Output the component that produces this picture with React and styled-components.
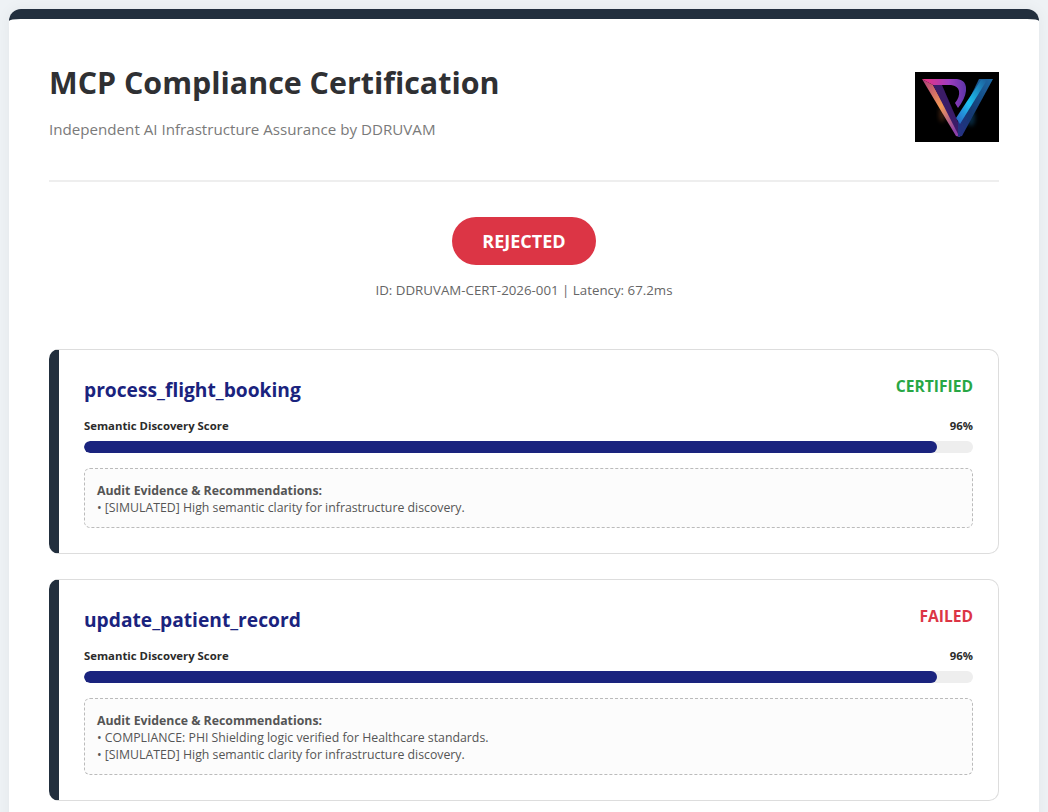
import React from 'react';
import styled, { createGlobalStyle } from 'styled-components';

const GlobalStyle = createGlobalStyle`
  html, body {
    margin: 0;
    padding: 0;
    background: #eef2f5;
    font-family: "Open Sans", "Noto Sans", "Liberation Sans", sans-serif;
  }
`;

const Page = styled.div`
  padding: 9px 9px 20px;
`;

const Sheet = styled.div`
  background: #fff;
  border-top: 10px solid #222f3e;
  border-radius: 12px;
  padding: 30px 40px 40px;
  box-shadow: 0 0 15px rgba(0, 0, 0, 0.05);
`;

const Header = styled.header`
  display: flex;
  justify-content: space-between;
  align-items: flex-start;
  height: 131px;
  border-bottom: 2px solid #eee;
  box-sizing: content-box;
`;

const Title = styled.h1`
  margin: 10px 0 0;
  font-size: 30.4px;
  line-height: 48px;
  font-weight: 700;
  color: #2f3033;
`;

const Subtitle = styled.p`
  margin: 11px 0 0;
  font-size: 15.15px;
  line-height: 22px;
  color: #7a7a7a;
`;

const LogoBox = styled.div`
  width: 84px;
  height: 70px;
  margin-top: 23px;
  background: #000;
`;

const Verdict = styled.section`
  display: flex;
  flex-direction: column;
  align-items: center;
  padding-top: 35px;
  margin-bottom: 50px;
`;

const Badge = styled.div`
  width: 144px;
  height: 48px;
  border-radius: 24px;
  background: #dc3545;
  color: #fff;
  font-size: 18px;
  font-weight: 700;
  line-height: 48px;
  text-align: center;
`;

const Meta = styled.div`
  margin-top: 16px;
  font-size: 13.3px;
  line-height: 18px;
  color: #666;
`;

const Card = styled.article`
  border: 1px solid #ddd;
  border-left: 10px solid #222f3e;
  border-radius: 10px;
  padding: 24px 25px 25px;
  margin-bottom: 25px;
`;

const CardTop = styled.div`
  display: flex;
  justify-content: space-between;
  align-items: flex-start;
  height: 43px;
`;

const ToolName = styled.h3`
  margin: 0;
  font-size: 19.2px;
  line-height: 32px;
  font-weight: 700;
  color: #1a237e;
`;

const Status = styled.span`
  font-size: 15.6px;
  line-height: 25px;
  font-weight: 700;
  color: ${(p) => p.color};
`;

const ScoreRow = styled.div`
  display: flex;
  justify-content: space-between;
  font-size: 11.35px;
  line-height: 18px;
  font-weight: 700;
  color: #2b2b2b;
`;

const Track = styled.div`
  height: 12px;
  margin-top: 6px;
  border-radius: 6px;
  background: #eee;
  overflow: hidden;
`;

const Fill = styled.div`
  height: 100%;
  border-radius: 6px;
  background: #1a237e;
`;

const Evidence = styled.div`
  margin-top: 15px;
  padding: 13px 12px 11px;
  border: 1px dashed #bbb;
  border-radius: 6px;
  background: #fcfcfc;
  font-size: 12.3px;
  line-height: 17px;
  color: #555;
`;

const EvidenceHead = styled.div`
  font-weight: 700;
`;

function Logo() {
  return (
    <LogoBox>
      <svg width="84" height="70" viewBox="0 0 84 70">
        <defs>
          <linearGradient id="leftArm" x1="0" y1="0" x2="0.7" y2="1">
            <stop offset="0" stopColor="#a83a7c" />
            <stop offset="0.55" stopColor="#f39a55" />
            <stop offset="1" stopColor="#8d3fa8" />
          </linearGradient>
          <linearGradient id="topBar" x1="0" y1="0" x2="1" y2="0">
            <stop offset="0" stopColor="#f0327c" />
            <stop offset="0.6" stopColor="#a03cc0" />
            <stop offset="1" stopColor="#5c35a8" />
          </linearGradient>
          <linearGradient id="outerArm" x1="1" y1="0" x2="0" y2="1">
            <stop offset="0" stopColor="#1f6aa6" />
            <stop offset="0.6" stopColor="#123a72" />
            <stop offset="1" stopColor="#2a2f86" />
          </linearGradient>
          <linearGradient id="innerArm" x1="1" y1="0" x2="0" y2="1">
            <stop offset="0" stopColor="#1a5f9c" />
            <stop offset="0.55" stopColor="#1fc0f0" />
            <stop offset="1" stopColor="#2a5fc0" />
          </linearGradient>
          <filter id="soft">
            <feGaussianBlur stdDeviation="0.5" />
          </filter>
          <filter id="glow" x="-50%" y="-50%" width="200%" height="200%">
            <feGaussianBlur stdDeviation="2" />
          </filter>
        </defs>
        <ellipse cx="27" cy="42" rx="3" ry="8" fill="#f08040" opacity="0.25" filter="url(#glow)" />
        <ellipse cx="56" cy="46" rx="4" ry="8" fill="#1c8cd8" opacity="0.3" filter="url(#glow)" />
        <g filter="url(#soft)">
          <path d="M7 7 L18 13 L44 60 L45 65 L41 64 Z" fill="url(#leftArm)" />
          <path d="M18 13 L27 13 L43 50 L43 62 Z" fill="#3a1a68" />
          <path d="M64 7 L78 7 L47 64 L43 65 L43 50 Z" fill="url(#outerArm)" />
          <path d="M66 8 L72 8 L45 52 L41 46 Z" fill="url(#innerArm)" />
          <path d="M7 7 L42 7 Q52 8 51 19 Q50 27 43 36 L40 31 Q45 25 44 19 Q43 14 36 13 L18 13 Z" fill="url(#topBar)" />
        </g>
      </svg>
    </LogoBox>
  );
}

function ToolCard({ name, status, statusColor, score, evidence }) {
  return (
    <Card>
      <CardTop>
        <ToolName>{name}</ToolName>
        <Status color={statusColor}>{status}</Status>
      </CardTop>
      <ScoreRow>
        <span>Semantic Discovery Score</span>
        <span>{score}%</span>
      </ScoreRow>
      <Track>
        <Fill style={{ width: `${score}%` }} />
      </Track>
      <Evidence>
        <EvidenceHead>Audit Evidence &amp; Recommendations:</EvidenceHead>
        {evidence.map((line) => (
          <div key={line}>• {line}</div>
        ))}
      </Evidence>
    </Card>
  );
}

export default function App() {
  return (
    <Page>
      <GlobalStyle />
      <Sheet>
        <Header>
          <div>
            <Title>MCP Compliance Certification</Title>
            <Subtitle>Independent AI Infrastructure Assurance by DDRUVAM</Subtitle>
          </div>
          <Logo />
        </Header>
        <Verdict>
          <Badge>REJECTED</Badge>
          <Meta>ID: DDRUVAM-CERT-2026-001 | Latency: 67.2ms</Meta>
        </Verdict>
        <ToolCard
          name="process_flight_booking"
          status="CERTIFIED"
          statusColor="#28a745"
          score={96}
          evidence={['[SIMULATED] High semantic clarity for infrastructure discovery.']}
        />
        <ToolCard
          name="update_patient_record"
          status="FAILED"
          statusColor="#dc3545"
          score={96}
          evidence={[
            'COMPLIANCE: PHI Shielding logic verified for Healthcare standards.',
            '[SIMULATED] High semantic clarity for infrastructure discovery.',
          ]}
        />
      </Sheet>
    </Page>
  );
}
